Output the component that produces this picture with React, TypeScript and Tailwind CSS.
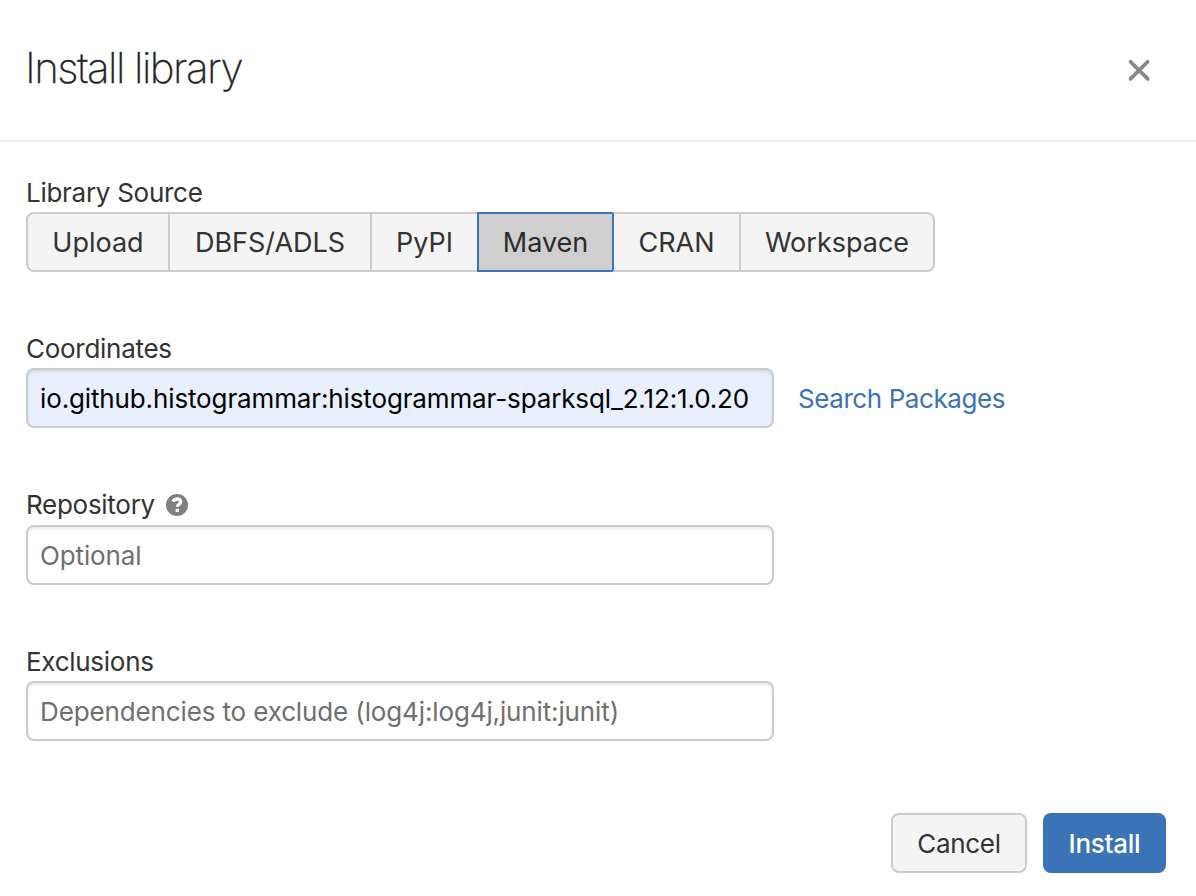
import type { ReactNode } from "react";

type Tab = { label: string; style: string };

const idle = "border-y-2 border-[#cccccc] bg-[#f4f4f4]";

const tabs: Tab[] = [
  { label: "Upload", style: `${idle} w-36 rounded-l-lg border-x-2` },
  { label: "DBFS/ADLS", style: `${idle} w-[202px] border-r-2` },
  { label: "PyPI", style: `${idle} w-[105px]` },
  { label: "Maven", style: "w-[137px] rounded-r-[2px] border-2 border-[#3b73b9] bg-[#cfcfcf] text-[#2b2b2b]" },
  { label: "CRAN", style: `${idle} w-[127px] border-r-2` },
  { label: "Workspace", style: `${idle} w-[194px] rounded-r-lg border-r-2` },
];

const inputStyle =
  "h-[60px] w-[748px] rounded-lg border-2 border-[#cccccc] px-3 text-[26px] tracking-[-0.13px] shadow-[inset_0_2px_3px_rgba(0,0,0,0.09)] outline-none placeholder:text-[#6f6f6f] placeholder:opacity-100";

function Field({ label, children }: { label: ReactNode; children: ReactNode }) {
  return (
    <div className="flex flex-col">
      <div className="flex h-10 items-center text-[26px] tracking-[-0.28px]">{label}</div>
      {children}
    </div>
  );
}

export default function App() {
  return (
    <main className="flex h-[896px] w-[1196px] flex-col overflow-hidden bg-white font-['Inter',sans-serif] text-[26px] text-[#333]">
      <header className="flex h-[142px] shrink-0 items-center justify-between border-b-2 border-[#ececec] pr-[45px] pl-[25px]">
        <h1 className="pb-1.5 text-[42px] font-extralight tracking-[-1.55px] text-[#222] [-webkit-text-stroke:0.3px_#333]">Install library</h1>
        <button aria-label="Close">
          <svg className="size-6" viewBox="0 0 24 24" fill="none" stroke="#878787" strokeWidth="3.7" strokeLinecap="round">
            <path d="M3.5 3.7 20.7 20.9M20.7 3.7 3.5 20.9" />
          </svg>
        </button>
      </header>

      <section className="flex flex-col gap-[56.4px] pt-[30px] pl-[26px]">
        <Field label="Library Source">
          <div className="flex h-[60px] text-[27px]">
            {tabs.map((tab) => (
              <button key={tab.label} className={`pt-[3px] ${tab.style}`}>
                {tab.label}
              </button>
            ))}
          </div>
        </Field>

        <Field label="Coordinates">
          <div className="flex items-center gap-6">
            <input
              aria-label="Coordinates"
              className={`${inputStyle} bg-[#e8effd] text-black`}
              defaultValue="io.github.histogrammar:histogrammar-sparksql_2.12:1.0.20"
            />
            <a href="#" className="tracking-[-0.42px] text-[#3b73b9]">Search Packages</a>
          </div>
        </Field>

        <Field
          label={
            <>
              Repository
              <svg className="ml-[11px] size-[22px]" viewBox="0 0 22 22">
                <circle cx="11" cy="11" r="11" fill="#808080" />
                <path d="M7.1 7.7C7.8 6 9.1 5 11 5c2.2 0 3.6 1.2 3.6 2.9 0 2.3-3.2 2.5-3.2 4.9" fill="none" stroke="white" strokeWidth="3.3" />
                <path d="M9.7 14.8H13V18H9.7z" fill="white" />
              </svg>
            </>
          }
        >
          <input aria-label="Repository" className={`${inputStyle} pt-px`} placeholder="Optional" />
        </Field>

        <Field label="Exclusions">
          <input
            aria-label="Exclusions"
            className={inputStyle}
            placeholder="Dependencies to exclude (log4j:log4j,junit:junit)"
          />
        </Field>
      </section>

      <footer className="mt-auto flex justify-end gap-4 pr-[30px] pb-[23px]">
        <button className="h-[60px] w-[136px] rounded-lg border-2 border-[#cccccc] bg-[#f4f4f4] tracking-[-0.3px]">Cancel</button>
        <button className="h-[60px] w-[123px] rounded-lg bg-[#3b73b7] font-medium tracking-[-0.25px] text-white">Install</button>
      </footer>
    </main>
  );
}
